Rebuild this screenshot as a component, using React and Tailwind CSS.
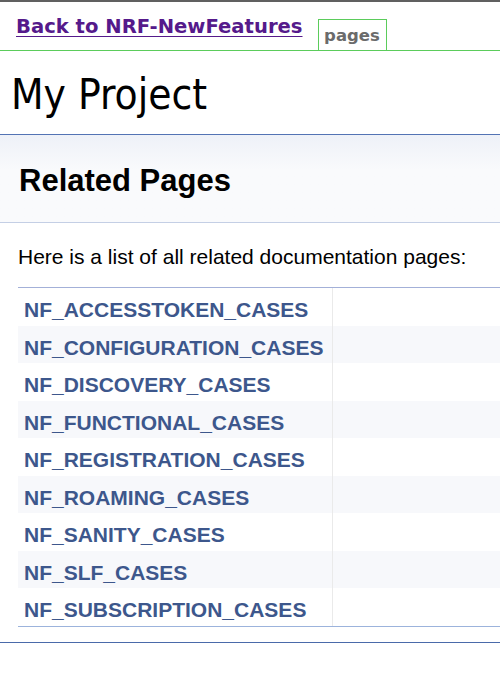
import React from 'react';

const pages = [
  'NF_ACCESSTOKEN_CASES',
  'NF_CONFIGURATION_CASES',
  'NF_DISCOVERY_CASES',
  'NF_FUNCTIONAL_CASES',
  'NF_REGISTRATION_CASES',
  'NF_ROAMING_CASES',
  'NF_SANITY_CASES',
  'NF_SLF_CASES',
  'NF_SUBSCRIPTION_CASES',
];

export default function App() {
  return (
    <div className="min-h-[686px] w-[500px] overflow-hidden bg-white">
      {/* top nav */}
      <div className="border-t-2 border-[#606060]">
        <div className="flex items-end border-b border-[#5bcc5b] pl-4 h-[49px]">
          <a
            href="#"
            className="mb-[13px] text-[19.6px] font-bold leading-none text-[#551a8b] underline underline-offset-[3px]"
            style={{ fontFamily: '"DejaVu Sans", Verdana, sans-serif' }}
          >
            Back to NRF-NewFeatures
          </a>
          <div
            className="ml-[15px] flex h-[31px] w-[69px] items-center justify-center border border-b-0 border-[#5bcc5b] pt-[3px] text-[16.5px] font-bold text-[#6b6b6b]"
            style={{ fontFamily: '"DejaVu Sans", Verdana, sans-serif' }}
          >
            pages
          </div>
        </div>
      </div>

      {/* project title */}
      <div className="flex h-[84px] items-center border-b border-[#5373b4] pl-[11px] pt-[4px]">
        <div
          className="text-[42px] leading-none text-black"
          style={{ fontFamily: '"DejaVu Sans Condensed", "DejaVu Sans", Tahoma, sans-serif' }}
        >
          My Project
        </div>
      </div>

      {/* header */}
      <div className="flex h-[88px] items-center border-b border-[#c4cfe5] bg-gradient-to-b from-[#eef1f8] to-[#f9fafc] to-40% pl-[19px] pt-[3px]">
        <h1
          className="text-[31px] font-bold leading-none text-black"
          style={{ fontFamily: '"Liberation Sans", Arial, sans-serif' }}
        >
          Related Pages
        </h1>
      </div>

      <div className="pl-[18px]" style={{ fontFamily: '"Liberation Sans", Arial, sans-serif' }}>
        <p className="pt-[21px] text-[21px] leading-[26px] text-black">
          Here is a list of all related documentation pages:
        </p>
        <div className="mt-[17px] border-y border-t-[#a3b0d8] border-b-[#9cb3dc]">
          {pages.map((p, i) => (
            <div key={p} className={`flex h-[37.5px] ${i % 2 === 1 ? 'bg-[#f7f8fb]' : 'bg-white'}`}>
              <div className="flex w-[315px] items-center border-r border-[#eaeaea] pl-[6px] pt-[6px]">
                <a href="#" className="text-[21px] font-bold leading-none text-[#3d578c]">
                  {p}
                </a>
              </div>
              <div className="flex-1" />
            </div>
          ))}
        </div>
      </div>
      <div className="mt-[15px] border-b border-[#4a6aaa]" />
    </div>
  );
}
